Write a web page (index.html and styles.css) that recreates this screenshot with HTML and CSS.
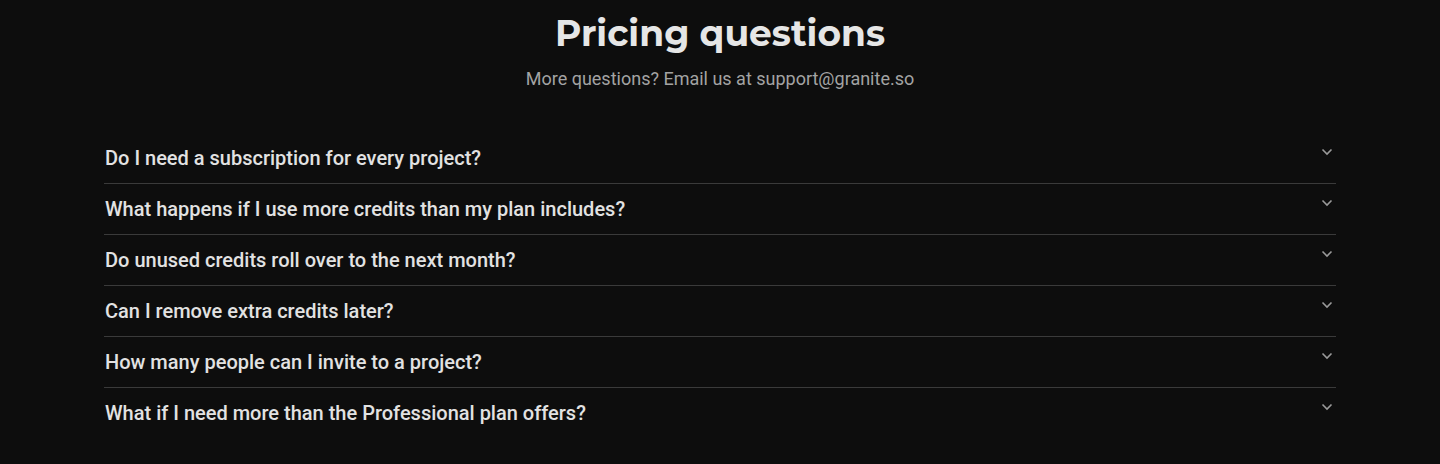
FILE: index.html
```html
<!DOCTYPE html>
<html>
    <head>
        <title>Pricing questions</title>
        <link rel="stylesheet" href="styles.css">
    </head>
    <body>
        <section class="faq">
            <h1 class="faq-title">Pricing questions</h1>
            <p class="faq-sub">More questions? Email us at support@granite.so</p>
            <div class="faq-list">
                <div class="faq-item">
                    <span class="faq-q">Do I need a subscription for every project?</span>
                    <svg class="faq-chev" viewBox="0 0 12 8"><path d="M1.5 1.5 L6 6 L10.5 1.5"/></svg>
                </div>
                <div class="faq-item">
                    <span class="faq-q">What happens if I use more credits than my plan includes?</span>
                    <svg class="faq-chev" viewBox="0 0 12 8"><path d="M1.5 1.5 L6 6 L10.5 1.5"/></svg>
                </div>
                <div class="faq-item">
                    <span class="faq-q">Do unused credits roll over to the next month?</span>
                    <svg class="faq-chev" viewBox="0 0 12 8"><path d="M1.5 1.5 L6 6 L10.5 1.5"/></svg>
                </div>
                <div class="faq-item">
                    <span class="faq-q">Can I remove extra credits later?</span>
                    <svg class="faq-chev" viewBox="0 0 12 8"><path d="M1.5 1.5 L6 6 L10.5 1.5"/></svg>
                </div>
                <div class="faq-item">
                    <span class="faq-q">How many people can I invite to a project?</span>
                    <svg class="faq-chev" viewBox="0 0 12 8"><path d="M1.5 1.5 L6 6 L10.5 1.5"/></svg>
                </div>
                <div class="faq-item">
                    <span class="faq-q">What if I need more than the Professional plan offers?</span>
                    <svg class="faq-chev" viewBox="0 0 12 8"><path d="M1.5 1.5 L6 6 L10.5 1.5"/></svg>
                </div>
            </div>
        </section>
    </body>
</html>
```

FILE: styles.css
```css
html, body {
    margin: 0;
    background: #0d0d0d;
}
body {
    font-family: Roboto, "Liberation Sans", sans-serif;
    color: #e2e2e2;
}
.faq {
    padding: 10px 104px 0 104px;
}
.faq-title {
    margin: 0;
    text-align: center;
    font-family: Montserrat, "Open Sans", sans-serif;
    font-weight: 700;
    font-size: 36px;
    line-height: 46px;
    color: #e6e6e6;
}
.faq-sub {
    margin: 11px 0 0 0;
    text-align: center;
    font-size: 18px;
    line-height: 24px;
    color: #a3a3a3;
}
.faq-list {
    margin-top: 42px;
}
.faq-item {
    display: flex;
    align-items: flex-start;
    justify-content: space-between;
    height: 50px;
    border-bottom: 1px solid #3a3a3a;
}
.faq-item:last-child {
    border-bottom: none;
}
.faq-q {
    padding: 13px 0 0 1px;
    font-size: 20px;
    line-height: 24px;
    font-weight: 500;
    color: #e2e2e2;
}
.faq-chev {
    width: 12px;
    height: 8px;
    margin: 15px 3px 0 0;
    fill: none;
    stroke: #9a9a9a;
    stroke-width: 1.6;
}
```
